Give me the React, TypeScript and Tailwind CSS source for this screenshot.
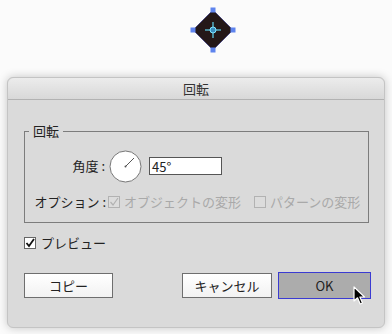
import React from 'react';

const FONT = { fontFamily: '"Noto Sans CJK JP", "Noto Sans", "Liberation Sans", sans-serif' };

const Diamond = () => (
  <svg width="46" height="46" viewBox="0 0 46 46">
    <polygon points="23,3 43,23 23,43 3,23" fill="#241818" stroke="#3a3a7a" strokeWidth="0.8" />
    <rect x="20.5" y="0.5" width="5" height="5" fill="#5f84ee" />
    <rect x="0.5" y="20.5" width="5" height="5" fill="#5f84ee" />
    <rect x="40.5" y="20.5" width="5" height="5" fill="#5f84ee" />
    <rect x="20.5" y="40.5" width="5" height="5" fill="#5f84ee" />
    <line x1="15" y1="23" x2="31" y2="23" stroke="#5fd6f0" strokeWidth="1.2" />
    <line x1="23" y1="15" x2="23" y2="31" stroke="#5fd6f0" strokeWidth="1.2" />
    <circle cx="23" cy="23" r="3" fill="#3a8fc0" stroke="#7fe6ff" strokeWidth="1" />
  </svg>
);

const Check = ({ checked, disabled }: { checked: boolean; disabled?: boolean }) => (
  <svg width="12" height="12" viewBox="0 0 12 12" className="shrink-0">
    <rect x="0.5" y="0.5" width="11" height="11" fill={disabled ? '#dcdcdc' : '#ffffff'} stroke={disabled ? '#b2b2b2' : '#666666'} />
    {checked && (
      <path d="M2.5 6 L5 9 L10 2" fill="none" stroke={disabled ? '#b2b2b2' : '#111111'} strokeWidth={disabled ? 1.2 : 1.8} />
    )}
  </svg>
);

const Dial = () => (
  <svg width="33" height="33" viewBox="0 0 33 33" className="shrink-0">
    <circle cx="16.5" cy="16.5" r="15.5" fill="#ffffff" stroke="#777777" />
    <line x1="16.5" y1="16.5" x2="25" y2="8" stroke="#555555" strokeWidth="1" />
    <circle cx="16.5" cy="16.5" r="1" fill="#555555" />
  </svg>
);

const Cursor = () => (
  <svg width="14" height="20" viewBox="0 0 14 20">
    <path d="M1 1 L1 15 L4.5 11.8 L7.2 18 L9.5 17 L6.9 11 L11.5 11 Z" fill="#000000" stroke="#ffffff" strokeWidth="1.2" strokeLinejoin="round" />
  </svg>
);

export default function App() {
  return (
    <div className="w-[392px] h-[334px] bg-[#fbfbfb] text-[13px] text-[#222] overflow-hidden relative" style={FONT}>
      <div className="h-[77px] pl-[190px] pt-[7px]">
        <Diamond />
      </div>

      <div className="ml-[7px] w-[378px] h-[251px] bg-[#dadada] rounded-md shadow-[0_0_10px_rgba(0,0,0,0.22)] border border-[#c4c4c4] flex flex-col">
        <div className="h-[22px] shrink-0 rounded-t-md bg-gradient-to-b from-[#ececec] to-[#d8d8d8] border-b border-[#b2b2b2] flex items-center justify-center text-[#333]">
          回転
        </div>

        <div className="mt-[31px] ml-[16px] mr-[15px] relative border border-[#7c7c7c] pt-[18px] pb-[12px] pl-[8px]">
          <div className="absolute -top-[9px] left-[4px] px-[4px] bg-[#dadada] leading-[16px]">回転</div>
          <div className="flex items-center h-[32px]">
            <div className="w-[73px] text-right pr-[1px]">角度 :</div>
            <div className="ml-[3px]">
              <Dial />
            </div>
            <div className="ml-[7px] w-[73px] h-[18px] bg-white border border-[#555] flex items-center pl-[2px] leading-none">
              45°
            </div>
          </div>
          <div className="flex items-center h-[16px] mt-[12px]">
            <div className="w-[73px] text-right">オプション :</div>
            <div className="ml-[2px] flex items-center gap-[4px] text-[#a9a9a9]">
              <Check checked disabled />
              <span>オブジェクトの変形</span>
            </div>
            <div className="ml-[13px] flex items-center gap-[4px] text-[#a9a9a9]">
              <Check checked={false} disabled />
              <span>パターンの変形</span>
            </div>
          </div>
        </div>

        <div className="ml-[16px] mt-[12px] h-[16px] flex items-center gap-[5px]">
          <Check checked />
          <span>プレビュー</span>
        </div>

        <div className="mt-[21px] ml-[16px] mr-[13px] flex items-center">
          <button className="w-[89px] h-[25px] bg-gradient-to-b from-white to-[#f2f2f2] border border-[#6e6e6e] text-[#222]">コピー</button>
          <div className="flex-1" />
          <button className="w-[90px] h-[25px] bg-gradient-to-b from-white to-[#f2f2f2] border border-[#6e6e6e] text-[#222]">キャンセル</button>
          <button className="ml-[6px] w-[93px] h-[27px] bg-[#acacac] border-[1.5px] border-[#3b3bd2] text-[#222]">OK</button>
        </div>
      </div>

      <div className="absolute left-[353px] top-[286px]">
        <Cursor />
      </div>
    </div>
  );
}
